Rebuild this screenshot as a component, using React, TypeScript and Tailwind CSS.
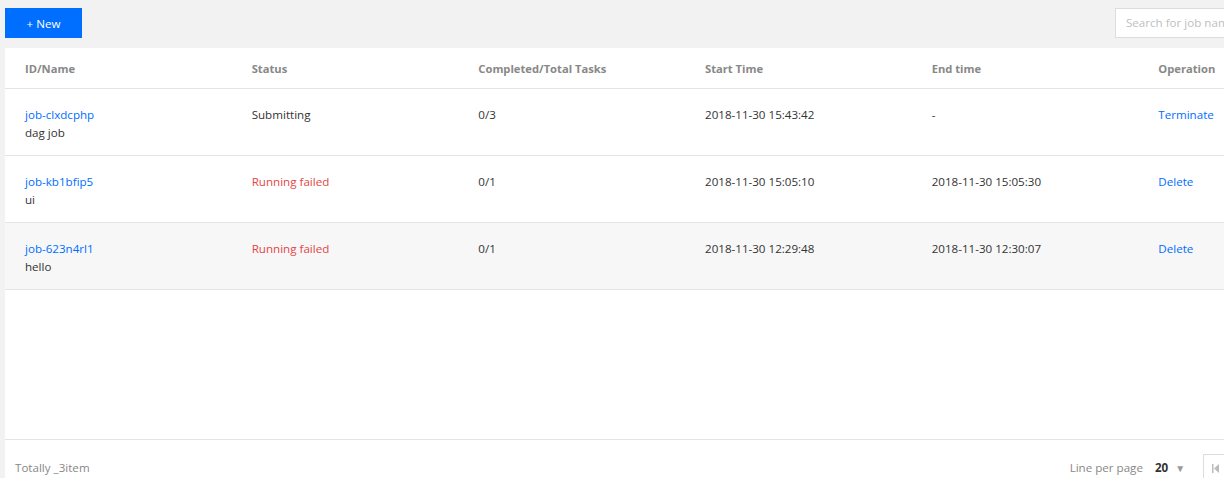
import { Search } from 'lucide-react'

const jobs = [
  { id: 'job-clxdcphp', name: 'dag job', status: 'Submitting', failed: false, tasks: '0/3', start: '2018-11-30 15:43:42', end: '-', op: 'Terminate', hover: false },
  { id: 'job-kb1bfip5', name: 'ui', status: 'Running failed', failed: true, tasks: '0/1', start: '2018-11-30 15:05:10', end: '2018-11-30 15:05:30', op: 'Delete', hover: false },
  { id: 'job-623n4rl1', name: 'hello', status: 'Running failed', failed: true, tasks: '0/1', start: '2018-11-30 12:29:48', end: '2018-11-30 12:30:07', op: 'Delete', hover: true },
]

const headers = ['ID/Name', 'Status', 'Completed/Total Tasks', 'Start Time', 'End time', 'Operation']

export default function App() {
  return (
    <div
      className="h-[478px] w-[1224px] overflow-hidden bg-[#f2f2f2] pl-[5px] pt-2 text-[11.6px] text-[#333]"
      style={{ fontFamily: '"Open Sans", "Noto Sans", sans-serif' }}
    >
      <div className="w-[1360px]">
        {/* toolbar */}
        <div className="flex h-[30px] items-center">
          <button className="h-[30px] w-[77px] bg-[#006eff] pt-[2px] text-white">+ New</button>
          <div className="ml-[1033px] flex h-[30px] w-[220px] items-center border border-[#dddddd] bg-white pl-[10px]">
            <span className="text-[#c0c0c0]">Search for job name</span>
            <Search className="ml-auto mr-2 h-4 w-4 text-[#888]" />
          </div>
        </div>

        {/* table panel */}
        <div className="mt-[10px] bg-white">
          <div className="grid h-[41px] grid-cols-6 items-center border-b border-[#e5e5e5] pt-[2px]">
            {headers.map((h) => (
              <div key={h} className="pl-5 text-[11.2px] font-bold text-[#888]">{h}</div>
            ))}
          </div>

          {jobs.map((job) => (
            <div
              key={job.id}
              className={`grid h-[67px] grid-cols-6 border-b border-[#e5e5e5] pt-[17px] leading-[18px] ${job.hover ? 'bg-[#f7f7f7]' : ''}`}
            >
              <div className="pl-5">
                <div className="text-[#006eff]">{job.id}</div>
                <div>{job.name}</div>
              </div>
              <div className={`pl-5 ${job.failed ? 'text-[#e54545]' : ''}`}>{job.status}</div>
              <div className="pl-5">{job.tasks}</div>
              <div className="pl-5">{job.start}</div>
              <div className="pl-5">{job.end}</div>
              <div className="pl-5 text-[#006eff]">{job.op}</div>
            </div>
          ))}

          <div className="h-[150px] border-b border-[#e5e5e5]" />

          {/* footer */}
          <div className="flex h-[56px] items-center px-[10px]">
            <span className="text-[#888]">Totally _3item</span>
            <div className="ml-[980px] flex items-center">
              <span className="text-[#888]">Line per page</span>
              <span className="ml-[12px] font-bold text-[#333]">20</span>
              <span className="ml-[7px] text-[10px] text-[#999]">▼</span>
              <div className="ml-[18px] flex h-[28px] items-center">
                <div className="flex h-[28px] w-[26px] items-center justify-center border border-[#dddddd] bg-white">
                  <svg width="8" height="9" viewBox="0 0 8 9">
                    <rect x="0" y="0" width="1.5" height="9" fill="#bbb" />
                    <path d="M7 0 L2 4.5 L7 9 Z" fill="#bbb" />
                  </svg>
                </div>
                <div className="flex h-[28px] w-[26px] items-center justify-center border border-l-0 border-[#dddddd] bg-white">
                  <svg width="6" height="9" viewBox="0 0 6 9">
                    <path d="M6 0 L1 4.5 L6 9 Z" fill="#bbb" />
                  </svg>
                </div>
              </div>
            </div>
          </div>
        </div>
      </div>
    </div>
  )
}
